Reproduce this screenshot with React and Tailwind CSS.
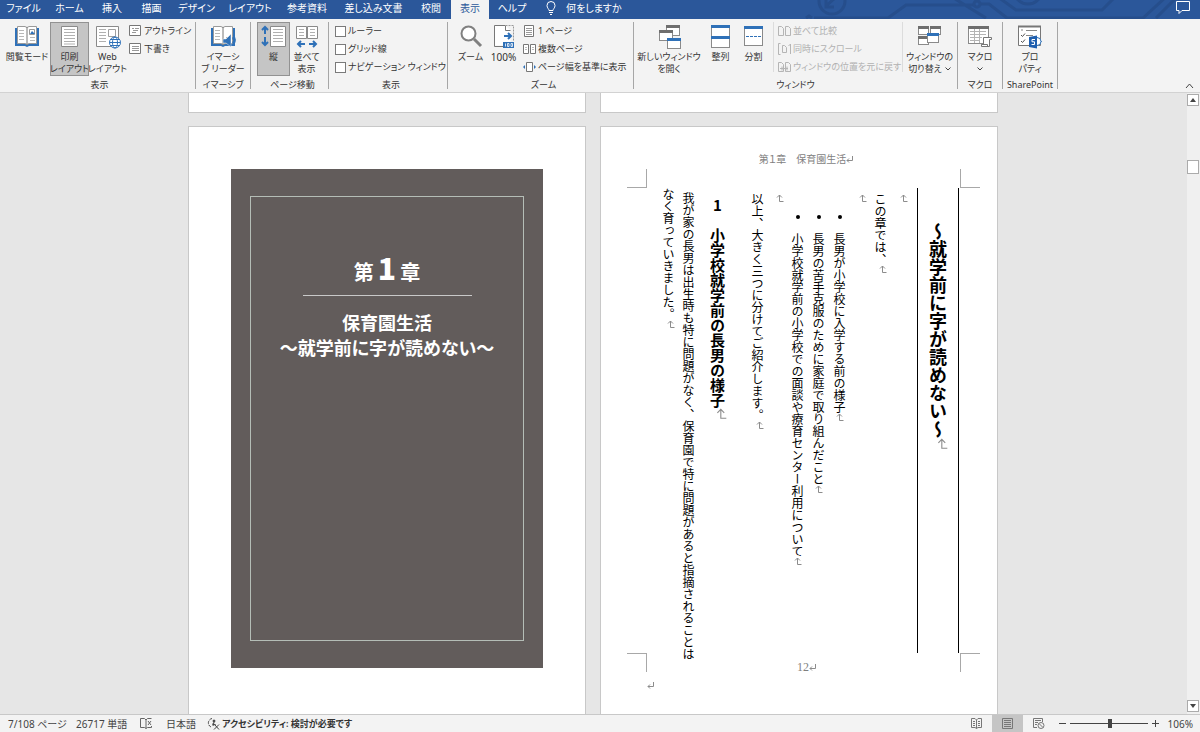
import clsx from 'clsx';

const BLUE = '#2f71b8';
const GRAY = '#777777';

/* ---------- Ribbon icons (26 x 26) ---------- */

function Icon({ children, w = 26, h = 26 }) {
  return (
    <svg width={w} height={h} viewBox={`0 0 ${w} ${h}`} fill="none" className="shrink-0" aria-hidden="true">
      {children}
    </svg>
  );
}

function BookShape() {
  return (
    <>
      <path d="M3 5H1v18h10l2 1 2-1h10V5h-2" fill={BLUE} />
      <path d="M3.500 3.500H11l2 1 2-1h7.500v17H15l-2 1-2-1H3.500z" fill="#fff" stroke="#9a9a9a" />
      <path d="M13 4v18" stroke={GRAY} />
      <path d="M5 7.500h5M5 10.500h5M5 13.500h5M5 16.500h5M16 14.500h5M16 17.500h5" stroke="#b8b8b8" />
    </>
  );
}

const ReadModeIcon = () => (
  <Icon>
    <BookShape />
    <path d="M15.500 6.500h5v5h-5z" fill="#fff" stroke="#999" />
    <path d="M16 11l2-3 3 3z" fill={BLUE} />
  </Icon>
);

const PrintLayoutIcon = () => (
  <Icon>
    <path d="M4.500 3.500h16v20h-16z" fill="#fff" stroke="#8a8a8a" />
    <path d="M7 6.500h11M7 9.500h11M7 12.500h11M7 15.500h11M7 18.500h11M7 21h11" stroke="#b0b0b0" />
  </Icon>
);

const Globe = () => (
  <g stroke={BLUE}>
    <circle cx="20" cy="19.500" r="5.500" fill="#fff" />
    <ellipse cx="20" cy="19.500" rx="2.500" ry="5.500" />
    <path d="M14.500 19.500h11M15.500 16.500h9M15.500 22.500h9" />
  </g>
);

const WebLayoutIcon = () => (
  <Icon>
    <path d="M1.500 3.500h22v20h-22z" fill="#fff" stroke="#8a8a8a" />
    <path d="M4 6.500h7M4 9.500h7M4 12.500h7M4 15.500h7M4 18.500h7" stroke="#b0b0b0" />
    <path d="M13.500 6.500h7v7h-7z" stroke="#a0a0a0" />
    <Globe />
  </Icon>
);

const ReaderIcon = () => (
  <Icon>
    <BookShape />
    <path d="M13 16h3l5-5v13l-5-4h-3z" fill={BLUE} stroke="#f3f3f3" strokeWidth=".5" />
    <path d="M22.500 14.500q2 3 0 6M24 12q3 5.500 0 10" stroke={BLUE} />
  </Icon>
);

const VerticalIcon = () => (
  <Icon>
    <path d="M9.500 3.500h15v20h-15z" fill="#fff" stroke="#8a8a8a" />
    <path d="M12 6.500h10M12 9.500h10M12 12.500h10M12 15.500h10M12 18.500h10" stroke="#b0b0b0" />
    <path d="M4 4v7M1 7l3-3 3 3M4 14v8M1 19l3 3 3-3" stroke={BLUE} strokeWidth="2" />
  </Icon>
);

const SideBySideIcon = () => (
  <Icon>
    <path d="M2.500 3.500h10v12h-10zM13.500 3.500h10v12h-10z" fill="#fff" stroke="#8a8a8a" />
    <path d="M5 6.500h5M5 9.500h5M5 12.500h5M16 6.500h5M16 9.500h5M16 12.500h5" stroke="#b0b0b0" />
    <path d="M11 21H4M7 18l-3 3 3 3M15 21h7M19 18l3 3-3 3" stroke={BLUE} strokeWidth="2" />
  </Icon>
);

const MagnifierIcon = () => (
  <Icon>
    <circle cx="10.500" cy="10.500" r="7" fill="#fff" stroke="#808080" strokeWidth="2" />
    <path d="M16 16l7 7" stroke="#808080" strokeWidth="3" />
  </Icon>
);

const HundredIcon = () => (
  <Icon>
    <path d="M3.500 2.500h11l5 5v15h-16z" fill="#fff" />
    <path d="M14 2.500H3.500v21H12" stroke={GRAY} />
    <path d="M14.500 2.500v5h5" stroke={GRAY} />
    <path d="M14.500 2.500h8V18" stroke="#999" strokeDasharray="2 1" />
    <path d="M13 13h7M17 10l3 3-3 3" stroke={BLUE} strokeWidth="2" />
    <path d="M12 19h11v6H12z" fill={BLUE} />
    <path d="M14.500 20.500v3M16.500 20.500h1.500v3h-1.500zM20 20.500h1.500v3h-1.500z" stroke="#fff" strokeWidth=".8" />
  </Icon>
);

function Win({ x, y, w = 13, h = 10, color = '#6e6e6e' }) {
  return (
    <>
      <rect x={x + 0.5} y={y + 0.5} width={w - 1} height={h - 1} fill="#fff" stroke="#8a8a8a" />
      <rect x={x} y={y} width={w} height="3" fill={color} />
    </>
  );
}

const NewWindowIcon = () => (
  <Icon>
    <Win x={10} y={2} w={14} h={11} />
    <Win x={3} y={7} w={14} h={11} />
    <Win x={11} y={15} w={14} h={11} color={BLUE} />
  </Icon>
);

const ArrangeIcon = () => (
  <Icon>
    <Win x={3} y={2} w={19} h={12} color={BLUE} />
    <Win x={3} y={13} w={19} h={12} color={BLUE} />
  </Icon>
);

const SplitIcon = () => (
  <Icon>
    <Win x={3} y={3} w={19} h={20} color={BLUE} />
    <path d="M5 13.500h15" stroke={BLUE} strokeDasharray="3 1" />
  </Icon>
);

const SwitchIcon = () => (
  <Icon>
    <Win x={1} y={3} w={11} h={9} />
    <Win x={13} y={3} w={11} h={9} />
    <Win x={1} y={13} w={11} h={9} />
    <Win x={10} y={10} w={12} h={10} color={BLUE} />
  </Icon>
);

const MacroIcon = () => (
  <Icon>
    <Win x={1} y={3} w={21} h={18} />
    <path d="M3 8.500h16M3 11.500h16M3 14.500h12M3 17.500h10M7.500 6v14M12.500 6v14" stroke="#b4b4b4" />
    <path d="M16.500 14.500h8v2h-2v7h-8v-2h2z" fill="#fff" stroke={GRAY} />
    <path d="M14.500 21.500h6v2" stroke={GRAY} />
  </Icon>
);

const PropertyIcon = () => (
  <Icon>
    <path d="M1.500 3.500h22v19h-22z" fill="#fff" stroke={GRAY} />
    <path d="M1 3.500h23" stroke={GRAY} strokeWidth="2" />
    <path d="M4 7h2M9 7.500h11M9 12.500h7" stroke="#888" />
    <path d="M4 12l1.500 1.500L8 10.500M4 18l1.500 1.500L8 16.500" stroke="#555" />
    <path d="M20 14.500l4.500 4-4.500 4.500" stroke={BLUE} />
    <circle cx="20" cy="18.500" r="4" fill="#fff" stroke={BLUE} />
    <path d="M12 14l8-1.500v13L12 24z" fill="#1f5fae" />
    <path d="M18 16.500h-3v2.300h2.500V21.500h-3" stroke="#fff" />
  </Icon>
);

/* ---------- Small icons (13 x 12) ---------- */

const SmallPage = () => (
  <Icon w={13} h={12}>
    <path d="M1.500.5h9v11h-9z" fill="#fff" stroke={GRAY} />
    <path d="M3 3.500h6M3 5.500h6M3 7.500h6M3 9.500h6" stroke="#999" />
  </Icon>
);

const SmallOutline = () => (
  <Icon w={13} h={12}>
    <path d="M.5.500h11v10H.5z" fill="#fff" stroke={GRAY} />
    <path d="M3 3.500h2M6 3.500h4M4 5.500h5M3 7.500h4" stroke="#999" />
  </Icon>
);

const SmallDraft = () => (
  <Icon w={13} h={12}>
    <path d="M.5.500h11v10H.5z" fill="#fff" stroke={GRAY} />
    <path d="M3 3.500h7M3 5.500h7M3 7.500h7" stroke="#999" />
  </Icon>
);

const SmallMulti = ({ color = GRAY }) => (
  <Icon w={13} h={12}>
    <path d="M.5 1.500h5v9h-5zM7.500 1.500h5v9h-5z" fill="#fff" stroke={color} />
    <path d="M2 4.500h2M2 6.500h2M9 4.500h2M9 6.500h2" stroke={color} opacity=".5" />
  </Icon>
);

const SmallPageWidth = () => (
  <Icon w={13} h={12}>
    <path d="M3.500 1.500h6v9h-6z" fill="#fff" stroke={GRAY} />
    <path d="M2 4L0 6l2 2zM11 4l2 2-2 2z" fill={BLUE} />
  </Icon>
);

const SmallSync = () => (
  <Icon w={13} h={12}>
    <path d="M2.500.5h-2v11h2M4.500 9.500v-7h2l2 2v5zM12.500 11V1M10.500 3l2-2" stroke="#b5b5b5" />
  </Icon>
);

const SmallReset = () => (
  <Icon w={13} h={12}>
    <path d="M.5 10.500v-9h3l2 2v7zM7.500 10.500v-9h3l2 2v7z" stroke="#b5b5b5" />
    <path d="M2 7.500h8M4 5.500v4M9 5.500v4" stroke="#b5b5b5" />
  </Icon>
);

const SmallCompare = () => (
  <Icon w={13} h={12}>
    <path d="M.5 10.500v-9h3l2 2v7zM7.500 10.500v-9h3l2 2v7z" stroke="#b5b5b5" />
  </Icon>
);

const Chevron = () => (
  <svg width="6" height="4" viewBox="0 0 6 4" fill="none" className="inline-block" aria-hidden="true">
    <path d="M.5.5L3 3 5.500.5" stroke="#444" />
  </svg>
);

/* ---------- Ribbon parts ---------- */

function Group({ label, className, children }) {
  return (
    <section className={clsx('flex shrink-0 flex-col border-r border-[#a6a6a6]', className)}>
      <div className="flex h-[57px] shrink-0 items-start">{children}</div>
      <div className="text-center leading-3">{label}</div>
    </section>
  );
}

function BigButton({ icon, lines, active, className }) {
  return (
    <button
      type="button"
      className={clsx(
        'flex h-[54px] flex-col items-center pt-px leading-3 outline-1 -outline-offset-1',
        active ? 'bg-[#c5c5c5] outline-[#929292]' : 'outline-transparent hover:bg-[#dadada]',
        className
      )}
    >
      {icon}
      <span className="mt-0.5 flex flex-col items-center">
        {lines.map((line, idx) => (
          <span key={idx} className="flex h-3 items-center gap-[3px]">{line}</span>
        ))}
      </span>
    </button>
  );
}

function SmallButton({ icon, children, disabled }) {
  return (
    <button
      type="button"
      disabled={disabled}
      className="flex h-[18px] items-center gap-0.5 text-[#333] disabled:text-[#b1b1b1]"
    >
      {icon}
      {children}
    </button>
  );
}

function CheckRow({ label }) {
  return (
    <label className="flex h-[18px] items-center gap-[2px]">
      <input type="checkbox" className="size-[11px] appearance-none border border-[#7a7a7a] bg-white checked:bg-[#2b579a]" />
      {label}
    </label>
  );
}

const tabs = [
  { label: 'ファイル', width: 'w-[47px]' },
  { label: 'ホーム', width: 'w-[45px]' },
  { label: '挿入', width: 'w-[40px]' },
  { label: '描画', width: 'w-[39px]' },
  { label: 'デザイン', width: 'w-[51px]' },
  { label: 'レイアウト', width: 'w-[56px]' },
  { label: '参考資料', width: 'w-[58px]' },
  { label: '差し込み文書', width: 'w-[75px]' },
  { label: '校閲', width: 'w-[40px]' },
  { label: '表示', width: 'w-[38px]', active: true },
  { label: 'ヘルプ', width: 'w-[46px]' },
];

function TitleTabs() {
  return (
    <header className="relative flex h-[19px] shrink-0 items-stretch overflow-hidden bg-[#2b579a] leading-4 text-white">
      <svg width="440" height="19" className="absolute top-0 right-0" fill="none" stroke="#264e8c" strokeWidth="3" aria-hidden="true">
        <circle cx="72" cy="1" r="13" />
        <path d="M66 6l9-8M66-2v9h8M46 18l3-2 3 2" />
        <path d="M54 18h74l18-13h68M192-3l34 21M221 4h8l18 14h136l24-22M238-3l18 13h86l14-14M396 18l20-20" />
        <circle cx="217" cy="4" r="3" />
        <circle cx="268" cy="-10" r="14" />
      </svg>
      <nav className="relative flex items-stretch" role="tablist">
        {tabs.map((tab) => (
          <button
            key={tab.label}
            type="button"
            role="tab"
            aria-selected={!!tab.active}
            className={clsx(
              'flex items-start justify-center whitespace-nowrap',
              tab.width,
              tab.active && 'bg-[#f3f3f3] text-[#2b579a]'
            )}
          >
            {tab.label}
          </button>
        ))}
      </nav>
      <button type="button" className="relative ml-[10px] flex items-start gap-[9px]">
        <svg width="12" height="14" viewBox="0 0 12 14" fill="none" stroke="#fff" className="mt-px" aria-hidden="true">
          <path d="M4 9.500C4 8 2 7 2 4.500a4 4 0 0 1 8 0C10 7 8 8 8 9.500zM4 11.500h4M5 13.500h2" />
        </svg>
        何をしますか
      </button>
      <button type="button" aria-label="コメント" className="relative mr-[10px] mb-1 ml-auto">
        <svg width="14" height="13" viewBox="0 0 14 13" fill="none" stroke="#fff" aria-hidden="true">
          <path d="M.5.5h13v9H6l-3 3v-3H.5z" />
        </svg>
      </button>
    </header>
  );
}

function Ribbon() {
  return (
    <div className="flex h-[74px] shrink-0 border-b border-[#d2d2d2] bg-[#f3f3f3] py-[3px] text-[9px] whitespace-nowrap text-[#333]">
      <Group label="表示" className="w-[196px] pl-1">
        <BigButton icon={<ReadModeIcon />} lines={['閲覧モード']} className="w-[46px]" />
        <BigButton icon={<PrintLayoutIcon />} lines={['印刷', 'レイアウト']} active className="w-[39px]" />
        <BigButton icon={<WebLayoutIcon />} lines={['Web', 'レイアウト']} className="w-[37px]" />
        <div className="ml-[3px]">
          <SmallButton icon={<SmallOutline />}>アウトライン</SmallButton>
          <SmallButton icon={<SmallDraft />}>下書き</SmallButton>
        </div>
      </Group>
      <Group label="イマーシブ" className="w-[55px]">
        <BigButton icon={<ReaderIcon />} lines={['イマーシ', 'ブ リーダー']} className="w-full" />
      </Group>
      <Group label="ページ移動" className="w-[78px] pl-1.5">
        <BigButton icon={<VerticalIcon />} lines={['縦']} active className="w-[33px]" />
        <BigButton icon={<SideBySideIcon />} lines={['並べて', '表示']} className="w-[33px]" />
      </Group>
      <Group label="表示" className="w-[119px] pl-1.5">
        <div>
          <CheckRow label="ルーラー" />
          <CheckRow label="グリッド線" />
          <CheckRow label="ナビゲーション ウィンドウ" />
        </div>
      </Group>
      <Group label="ズーム" className="w-[186px] pl-1.5">
        <BigButton icon={<MagnifierIcon />} lines={['ズーム']} className="w-[33px]" />
        <BigButton icon={<HundredIcon />} lines={[<span className="text-[10px]">100%</span>]} className="w-[33px]" />
        <div className="ml-[3px]">
          <SmallButton icon={<SmallPage />}>1 ページ</SmallButton>
          <SmallButton icon={<SmallMulti />}>複数ページ</SmallButton>
          <SmallButton icon={<SmallPageWidth />}>ページ幅を基準に表示</SmallButton>
        </div>
      </Group>
      <Group label="ウィンドウ" className="w-[324px]">
        <BigButton icon={<NewWindowIcon />} lines={['新しいウィンドウ', 'を開く']} className="w-[70px]" />
        <BigButton icon={<ArrangeIcon />} lines={['整列']} className="w-[33px]" />
        <BigButton icon={<SplitIcon />} lines={['分割']} className="w-[33px]" />
        <div className="ml-[3px] h-[50px] w-[130px] border-x border-[#dcdcdc] pl-1">
          <SmallButton icon={<SmallCompare />} disabled>並べて比較</SmallButton>
          <SmallButton icon={<SmallSync />} disabled>同時にスクロール</SmallButton>
          <SmallButton icon={<SmallReset />} disabled>ウィンドウの位置を元に戻す</SmallButton>
        </div>
        <BigButton
          icon={<SwitchIcon />}
          lines={['ウィンドウの', <>切り替え <Chevron /></>]}
          className="w-[53px]"
        />
      </Group>
      <Group label="マクロ" className="w-[45px]">
        <BigButton icon={<MacroIcon />} lines={['マクロ', <Chevron />]} className="w-full" />
      </Group>
      <Group label="SharePoint" className="w-[55px]">
        <BigButton icon={<PropertyIcon />} lines={['プロ', 'パティ']} className="w-full" />
      </Group>
      <button type="button" aria-label="リボンを折りたたむ" className="mr-1.5 ml-auto self-end">
        <svg width="9" height="6" viewBox="0 0 9 6" fill="none" stroke="#444" aria-hidden="true">
          <path d="M1 5l3.500-4L8 5" />
        </svg>
      </button>
    </div>
  );
}

/* ---------- Document ---------- */

function Return({ className }) {
  return (
    <svg width="7" height="7" viewBox="0 0 7 7" fill="none" stroke="#8c8c8c" className={clsx('inline-block', className)} aria-hidden="true">
      <path d="M6.500 0v4.500H1M3 2.500l-2 2 2 2" />
    </svg>
  );
}

// paragraph mark as it appears in vertical text
function VerticalReturn({ large }) {
  return (
    <svg
      width={large ? 11 : 8}
      height={large ? 11 : 8}
      viewBox="0 0 8 8"
      fill="none"
      stroke="#8c8c8c"
      strokeWidth={large ? 0.8 : 1}
      className="inline-block"
      aria-hidden="true"
    >
      <path d="M7.500 7.500H3.500V1M1 3.500L3.500 1 6 3.500" />
    </svg>
  );
}

const bullets = [
  '長男が小学校に入学する前の様子',
  '長男の苦手克服のために家庭で取り組んだこと',
  '小学校就学前の小学校での面談や療育センター利用について',
];

const page = "w-[398px] shrink-0 border-x border-[#c8c8c8] bg-white font-['Noto_Sans_CJK_JP',sans-serif]";

function CoverPage() {
  return (
    <article className={clsx(page, 'border-t px-[42px] pt-[42px]')}>
      <div className="h-[499px] bg-[#625c5b] px-[19px] py-[27px] text-white">
        <div className="flex h-full flex-col items-center border border-[#b4bdb6] pt-[56px] font-bold">
          <h1 className="flex h-[34px] items-baseline gap-1 text-xl leading-7">
            第<span className="text-3xl leading-7 font-black">1</span>章
          </h1>
          <hr className="mt-2 w-[169px] border-[#c9c9c9]" />
          <p className="mt-[14px] text-center text-lg leading-[25px] whitespace-nowrap">
            保育園生活
            <br />
            ～就学前に字が読めない～
          </p>
        </div>
      </div>
    </article>
  );
}

function TextPage() {
  return (
    <article className={clsx(page, 'border-t text-black')}>
      <div className="flex h-[42px] items-end justify-center pb-[2px] pl-[14px] text-[10px] leading-4 text-[#7f7f7f]">
        <span>第１章　保育園生活</span>
        <Return className="mb-1" />
      </div>
      <div className="flex h-[19px] justify-between pr-[17px] pl-[26px]">
        <div className="w-5 border-r border-b border-[#a8a8a8]" />
        <div className="w-5 border-b border-l border-[#a8a8a8]" />
      </div>
      <div className="mr-[36px] ml-auto h-[465px] text-xs leading-5 whitespace-nowrap [writing-mode:vertical-rl]">
        <h2 className="mr-[2px] ml-[6px] h-full border-r border-l border-black pt-[34px] text-lg leading-10 font-bold">
          ～就学前に字が読めない～<VerticalReturn large />
        </h2>
        <p className="pt-[6px]"><VerticalReturn /></p>
        <p className="pt-[5px] leading-[21px]">この章では、<VerticalReturn /></p>
        <p className="pt-[6px]"><VerticalReturn /></p>
        <ul className="leading-[21px]">
          {bullets.map((text) => (
            <li key={text} className="flex items-center pt-[27px]">
              <span className="mb-[14px] size-1 rounded-full bg-black" />
              {text}
              <VerticalReturn />
            </li>
          ))}
        </ul>
        <p className="pt-[6px]"><VerticalReturn /></p>
        <p className="pt-[5px]">以上、大きく三つに分けてご紹介します。<VerticalReturn /></p>
        <h3 className="mr-[11px] pt-[10px] text-[15px] leading-[38px] font-bold">
          <span className="[text-orientation:upright]">1</span>　小学校就学前の長男の様子<VerticalReturn large />
        </h3>
        <p className="pt-[4px]">我が家の長男は出生時も特に問題がなく、保育園で特に問題があると指摘されることは</p>
        <p>なく育っていきました。<VerticalReturn /></p>
      </div>
      <div className="flex h-[19px] justify-between pr-[17px] pl-[26px]">
        <div className="w-5 border-t border-r border-[#a8a8a8]" />
        <div className="flex items-center pt-[9px] pl-1.5 font-['Liberation_Serif',serif] text-xs text-[#7f7f7f]">
          12
          <Return />
        </div>
        <div className="w-5 border-t border-l border-[#a8a8a8]" />
      </div>
      <div className="pt-[5px] pl-[46px]"><Return /></div>
    </article>
  );
}

function ScrollBar() {
  const arrow = 'flex size-[12px] shrink-0 items-center justify-center border border-[#ababab] bg-white';
  return (
    <div className="flex w-[13px] shrink-0 flex-col bg-[#f0f0f0] pt-px pb-0.5">
      <button type="button" aria-label="上へ" className={arrow}>
        <svg width="6" height="4" aria-hidden="true"><path d="M0 4l3-4 3 4z" fill="#444" /></svg>
      </button>
      <div className="mt-[54px] h-[14px] w-[12px] border border-[#ababab] bg-white" />
      <button type="button" aria-label="下へ" className={clsx(arrow, 'mt-auto')}>
        <svg width="6" height="4" aria-hidden="true"><path d="M0 0l3 4 3-4z" fill="#444" /></svg>
      </button>
    </div>
  );
}

function StatusBar() {
  return (
    <footer className="flex h-[18px] shrink-0 items-center border-t border-[#c8c8c8] bg-[#f3f3f3] pr-[7px] pl-2 whitespace-nowrap text-[#444]">
      <button type="button" className="w-[68px] text-left">7/108 ページ</button>
      <button type="button" className="w-[64px] text-left">26717 単語</button>
      <button type="button" aria-label="文章校正" className="w-[26px]">
        <svg width="12" height="11" viewBox="0 0 12 11" fill="none" stroke="#666" aria-hidden="true">
          <path d="M6 2v8.500M6 2L4.500.5h-4v9h4l1.500 1 1.500-1h4V8M6 2l1.500-1.500h4M8 3l3 4M11 3L8 7" />
        </svg>
      </button>
      <button type="button" className="w-[41px] text-left">日本語</button>
      <button type="button" className="flex items-center gap-0.5 text-[9px] font-semibold text-[#333]">
        <svg width="13" height="13" viewBox="0 0 13 13" fill="none" stroke="#444" aria-hidden="true">
          <path d="M5 1.500a4.500 4.500 0 0 0-1 8.500" strokeDasharray="3 1" />
          <path d="M7 5l-1 4M5 7l4 1M7.500 7.500l4.500 5M12 7.500l-5 5" />
          <circle cx="7" cy="4" r="1" fill="#444" />
        </svg>
        アクセシビリティ: 検討が必要です
      </button>
      <div className="ml-auto flex h-full items-center">
        <button type="button" aria-label="閲覧モード" className="flex h-full w-[31px] items-center justify-center">
          <svg width="11" height="11" viewBox="0 0 11 11" fill="none" stroke="#777" aria-hidden="true">
            <path d="M5.500 2v8.500M5.500 2L4 .5H.5v9H4l1.500 1L7 9.500h3.500v-9H7zM2 3.500h2M2 5.500h2M2 7.500h2M7 3.500h2M7 5.500h2M7 7.500h2" />
          </svg>
        </button>
        <button type="button" aria-label="印刷レイアウト" className="flex h-full w-[31px] items-center justify-center bg-[#c5c5c5]">
          <svg width="11" height="11" viewBox="0 0 11 11" fill="none" stroke="#777" aria-hidden="true">
            <path d="M.5.5h10v10H.5zM2 2.500h7M2 4.500h7M2 6.500h7M2 8.500h7" />
          </svg>
        </button>
        <button type="button" aria-label="Webレイアウト" className="flex h-full w-[31px] items-center justify-center">
          <svg width="12" height="11" viewBox="0 0 12 11" fill="none" stroke="#777" aria-hidden="true">
            <path d="M4 9.500H.5v-9h9V4M2 2.500h6M2 4.500h3M2 6.500h2" />
            <circle cx="8" cy="7.500" r="3" />
            <path d="M6 5.500l4 4" />
          </svg>
        </button>
        <button type="button" aria-label="縮小" className="ml-[4px] flex w-[9px] justify-center">
          <svg width="7" height="7" stroke="#444" aria-hidden="true"><path d="M0 3.500h7" /></svg>
        </button>
        <input
          type="range"
          min="0"
          max="100"
          defaultValue="51"
          aria-label="ズーム"
          className="mx-[3px] h-2 w-[78px] appearance-none bg-transparent [&::-webkit-slider-runnable-track]:h-px [&::-webkit-slider-runnable-track]:bg-[#444] [&::-webkit-slider-thumb]:-mt-1 [&::-webkit-slider-thumb]:h-[9px] [&::-webkit-slider-thumb]:w-1 [&::-webkit-slider-thumb]:appearance-none [&::-webkit-slider-thumb]:bg-[#444]"
        />
        <button type="button" aria-label="拡大" className="flex w-[9px] justify-center">
          <svg width="7" height="7" stroke="#444" aria-hidden="true"><path d="M0 3.500h7M3.500 0v7" /></svg>
        </button>
        <button type="button" className="ml-[5px] w-[28px] text-right">106%</button>
      </div>
    </footer>
  );
}

export default function App() {
  return (
    <div className="flex h-screen flex-col overflow-hidden bg-[#f3f3f3] font-['Noto_Sans','Noto_Sans_CJK_JP',sans-serif] text-[10px] leading-[14px] [font-feature-settings:'palt']">
      <TitleTabs />
      <Ribbon />
      <div className="flex min-h-0 grow">
        <main className="flex min-w-0 grow flex-col gap-[13px] overflow-hidden bg-[#e6e6e6] pr-px">
          <div className="flex shrink-0 justify-center gap-[14px]">
            <div className={clsx(page, 'h-5 border-b')} />
            <div className={clsx(page, 'h-5 border-b')} />
          </div>
          <div className="flex min-h-0 grow justify-center gap-[14px]">
            <CoverPage />
            <TextPage />
          </div>
        </main>
        <ScrollBar />
      </div>
      <StatusBar />
    </div>
  );
}
